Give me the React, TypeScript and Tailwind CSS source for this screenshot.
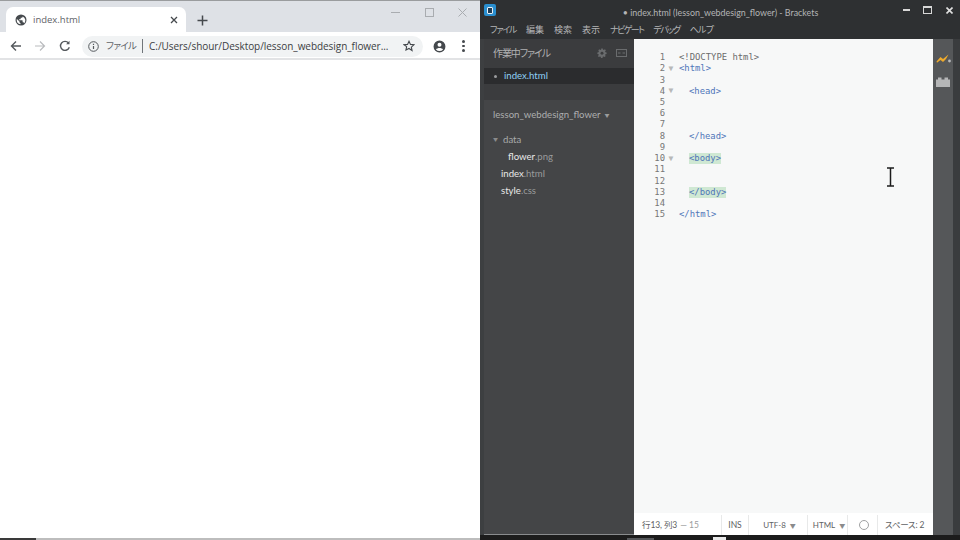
import React from "react";

const sans = { fontFamily: '"Open Sans","Noto Sans CJK JP",sans-serif' };
const ui = { fontFamily: 'Lato,"Noto Sans CJK JP",sans-serif' };
const mono = { fontFamily: '"DejaVu Sans Mono","Liberation Mono",monospace' };
const palt = "[font-feature-settings:'palt']";

function Line({ n, fold, children }: { n: number; fold?: boolean; children?: React.ReactNode }) {
  return (
    <div className="flex h-[11.22px] items-center text-[8.9px] leading-none">
      <span className="w-[31px] shrink-0 text-right text-[#767676]">{n}</span>
      <span className="flex w-[14px] shrink-0 justify-center">
        {fold && <span className="ml-[-2px] text-[8px] text-[#b8b8b8]">▼</span>}
      </span>
      {children}
    </div>
  );
}

function Tag({ children, hl, indent }: { children: string; hl?: boolean; indent?: boolean }) {
  return (
    <span className={`${indent ? "ml-[10px]" : ""} ${hl ? "bg-[#cfe8d3]" : ""} py-[1px] text-[#4f76b8]`}>{children}</span>
  );
}

function Browser() {
  return (
    <div className="flex h-full w-[480px] shrink-0 flex-col bg-white" style={sans}>
      <div className="h-[1px] bg-[#9a9c9e]" />
      <div className="flex h-[31px] items-end bg-[#dee1e6]">
        <div className="ml-[6px] flex h-[25px] w-[180px] items-center rounded-t-[7px] bg-white pl-[9px] pr-[8px] pt-[1px]">
          <svg width="12" height="12" viewBox="0 0 24 24" fill="#45494d">
            <path d="M12 1a11 11 0 1 0 0 22 11 11 0 0 0 0-22zM3.500 12c0-.8.1-1.500.3-2.200L9 15v1a2 2 0 0 0 2 2v2.400A8.500 8.500 0 0 1 3.500 12zm14.700 5.800A2 2 0 0 0 16.300 16.500h-1v-3a1 1 0 0 0-1-1h-6v-2h2a1 1 0 0 0 1-1v-2h2a2 2 0 0 0 2-2v-.400a8.500 8.500 0 0 1 3 13.700z" />
          </svg>
          <span className="ml-[6px] mt-[1px] text-[9.5px] text-[#5f6368]">index.html</span>
          <svg className="ml-auto" width="8" height="8" viewBox="0 0 8 8" stroke="#45494d" strokeWidth="1.300">
            <path d="M1 1l6 6M7 1L1 7" />
          </svg>
        </div>
        <svg className="mb-[6px] ml-[11px]" width="11" height="11" viewBox="0 0 11 11" stroke="#45494d" strokeWidth="1.500">
          <path d="M5.500 0.500v10M0.500 5.500h10" />
        </svg>
        <div className="mb-[15px] ml-auto flex items-center gap-[24.500px] pr-[13px]">
          <span className="h-[1px] w-[9px] bg-[#a9acb0]" />
          <span className="h-[9px] w-[9px] border border-[#a9acb0]" />
          <svg width="9" height="9" viewBox="0 0 9 9" stroke="#a9acb0" strokeWidth="1">
            <path d="M0.500 0.500l8 8M8.500 0.500l-8 8" />
          </svg>
        </div>
      </div>
      <div className="flex h-[28px] items-center border-b-[2px] border-[#e2e3e5] bg-white pt-[2px]">
        <svg className="ml-[10px]" width="12" height="12" viewBox="0 0 12 12" fill="none" stroke="#55595d" strokeWidth="1.400">
          <path d="M11 6H1.500M6 1.500L1.500 6 6 10.500" />
        </svg>
        <svg className="ml-[12px]" width="12" height="12" viewBox="0 0 12 12" fill="none" stroke="#b9bbbe" strokeWidth="1.200">
          <path d="M1 6h9.500M6 1.500L10.500 6 6 10.500" />
        </svg>
        <svg className="ml-[13px]" width="12" height="12" viewBox="0 0 12 12" fill="none" stroke="#55595d" strokeWidth="1.400">
          <path d="M10.300 7.200A4.500 4.500 0 1 1 9.500 3" />
          <path d="M10.500 0.800v3.400H7.100" fill="#55595d" stroke="none" />
        </svg>
        <div className="ml-[11px] flex h-[21px] w-[341px] items-center rounded-full bg-[#f1f3f4] pl-[6px] pr-[8px]">
          <svg width="11" height="11" viewBox="0 0 11 11" fill="none" stroke="#55595d" strokeWidth="1">
            <circle cx="5.500" cy="5.500" r="4.800" />
            <path d="M5.500 5v3M5.500 2.700v1.200" strokeWidth="1.200" />
          </svg>
          <span className={`ml-[7px] whitespace-nowrap text-[9.500px] tracking-[-0.7px] text-[#5f6368] ${palt}`}>ファイル</span>
          <span className="ml-[6px] h-[14px] w-[1px] bg-[#70757a]" />
          <span className="ml-[6px] whitespace-nowrap text-[10px] tracking-[-0.05px] text-[#3c4043]">
            C:/Users/shour/Desktop/lesson_webdesign_flower...
          </span>
          <svg className="ml-auto shrink-0" width="12" height="12" viewBox="0 0 24 24" fill="none" stroke="#45494d" strokeWidth="2.200">
            <path d="M12 2.500l2.900 6.300 6.900.8-5.100 4.700 1.400 6.800L12 17l-6.100 3.100 1.400-6.800L2.200 9.600l6.900-.8z" />
          </svg>
        </div>
        <svg className="ml-[10px]" width="13" height="13" viewBox="0 0 24 24" fill="#45494d">
          <path d="M12 1a11 11 0 1 0 0 22 11 11 0 0 0 0-22zm0 4a3.700 3.700 0 1 1 0 7.400A3.700 3.700 0 0 1 12 5zm0 15.500a8.500 8.500 0 0 1-6.500-3c.9-1.700 4-2.700 6.500-2.700s5.600 1 6.500 2.700a8.500 8.500 0 0 1-6.500 3z" />
        </svg>
        <div className="ml-[16px] flex flex-col gap-[2px]">
          <span className="h-[2.500px] w-[2.500px] rounded-full bg-[#45494d]" />
          <span className="h-[2.500px] w-[2.500px] rounded-full bg-[#45494d]" />
          <span className="h-[2.500px] w-[2.500px] rounded-full bg-[#45494d]" />
        </div>
      </div>
      <div className="flex-1" />
      <div className="flex h-[2px] bg-[#bdbdbd]">
        <div className="w-[36px] bg-[#3a3a3a]" />
      </div>
    </div>
  );
}

function Sidebar() {
  return (
    <div className={`flex w-[150px] shrink-0 flex-col border-b border-[#8a8c8e] bg-[#3b3c3e] text-[#b0b1b2] ${palt}`} style={ui}>
      <div className="flex h-[29px] items-center pb-[1px] pl-[9px] pr-[7px] text-[10px]">
        <span className="tracking-[-1.1px]">作業中ファイル</span>
        <svg className="ml-auto" width="10" height="10" viewBox="0 0 24 24" fill="#6a6c6e">
          <path d="M10 1h4l.6 3 2.300 1 2.600-1.700 2.800 2.800L20 8.700l1 2.300 3 .6v3.800l-3 .6-1 2.300 1.700 2.600-2.800 2.800-2.600-1.700-2.300 1-.6 3h-4l-.6-3-2.300-1-2.600 1.700-2.800-2.800L4 18.300l-1-2.300-3-.6v-3.800l3-.6 1-2.300L2.300 6.100l2.800-2.800L7.700 5 10 4z" transform="scale(0.92) translate(1 0)" />
          <circle cx="12" cy="12.500" r="3.500" fill="#3b3c3e" />
        </svg>
        <svg className="ml-[9px]" width="11" height="8" viewBox="0 0 11 8" fill="none" stroke="#6a6c6e">
          <rect x="0.500" y="0.500" width="10" height="7" />
          <path d="M2 4h2.500M6.500 4H9" />
        </svg>
      </div>
      <div className="flex h-[16px] items-center bg-[#2b2c2e] pl-[10px] text-[9.600px] text-[#8fd0f5]">
        <span className="h-[3px] w-[3px] rounded-full bg-[#9a9c9e]" />
        <span className="ml-[7px]">index.html</span>
      </div>
      <div className="h-[16px]" />
      <div className="flex flex-1 flex-col bg-[#444547]">
        <div className="mt-[8px] flex h-[14px] items-center pl-[9px] text-[9.600px] text-[#adaeaf]">
          lesson_webdesign_flower
          <span className="ml-[4px] mt-[1px] text-[5px] text-[#9a9b9c]">▼</span>
        </div>
        <div className="mt-[9.500px] flex h-[17px] items-center pl-[9px] text-[9.600px] text-[#a9aaab]">
          <span className="mr-[5px] text-[5px] text-[#8a8b8c]">▼</span>
          data
        </div>
        <div className="flex h-[17px] items-center pl-[24px] text-[9.600px]">
          <span className="text-[#e8e8e8]">flower</span>
          <span className="text-[#9a9b9c]">.png</span>
        </div>
        <div className="flex h-[17px] items-center pl-[17px] text-[9.600px]">
          <span className="text-[#e8e8e8]">index</span>
          <span className="text-[#9a9b9c]">.html</span>
        </div>
        <div className="flex h-[17px] items-center pl-[17px] text-[9.600px]">
          <span className="text-[#e8e8e8]">style</span>
          <span className="text-[#9a9b9c]">.css</span>
        </div>
      </div>
    </div>
  );
}

function Editor() {
  return (
    <div className="relative flex flex-1 flex-col bg-[#f7f8f8]">
      <div className="flex-1 pt-[13px]" style={mono}>
        <Line n={1}><span className="text-[#6b6b6b]">&lt;!DOCTYPE html&gt;</span></Line>
        <Line n={2} fold><Tag>&lt;html&gt;</Tag></Line>
        <Line n={3} />
        <Line n={4} fold><Tag indent>&lt;head&gt;</Tag></Line>
        <Line n={5} />
        <Line n={6} />
        <Line n={7} />
        <Line n={8}><Tag indent>&lt;/head&gt;</Tag></Line>
        <Line n={9} />
        <Line n={10} fold><Tag indent hl>&lt;body&gt;</Tag></Line>
        <Line n={11} />
        <Line n={12} />
        <Line n={13}><Tag indent hl>&lt;/body&gt;</Tag></Line>
        <Line n={14} />
        <Line n={15}><Tag>&lt;/html&gt;</Tag></Line>
      </div>
      <svg className="absolute left-[252px] top-[128px]" width="9" height="20" viewBox="0 0 9 20" fill="none" stroke="#1c1c1c" strokeWidth="1.500">
        <path d="M1 1h7M4.500 1v18M1 19h7" />
      </svg>
      <div className={`flex h-[22px] items-center bg-white pt-[2px] text-[8.500px] text-[#606264] ${palt}`} style={ui}>
        <div className="flex h-full w-[88px] items-center border-r border-[#e8e9e9] pl-[8px]">
          <span className="tracking-[-0.1px]">行13, 列3</span>
          <span className="ml-[3px] text-[#9a9b9c]">— 15</span>
        </div>
        <div className="flex h-full w-[27px] items-center justify-center border-r border-[#e8e9e9]">INS</div>
        <div className="flex h-full w-[59px] items-center justify-center border-r border-[#e8e9e9] pl-[3px] text-[8px]">
          UTF-8<span className="ml-[4px] text-[6px] text-[#8a8b8c]">▼</span>
        </div>
        <div className="flex h-full w-[40px] items-center justify-center border-r border-[#e8e9e9] pl-[3px] text-[8px]">
          HTML<span className="ml-[4px] text-[6px] text-[#8a8b8c]">▼</span>
        </div>
        <div className="flex h-full w-[30px] items-center justify-center border-r border-[#e8e9e9]">
          <span className="ml-[3px] h-[10px] w-[10px] rounded-full border border-[#a0a1a2]" />
        </div>
        <div className="flex h-full flex-1 items-center pl-[7px] tracking-[-0.2px]">スペース: 2</div>
      </div>
    </div>
  );
}

function Brackets() {
  return (
    <div className="flex h-full flex-1 flex-col bg-[#2e3032] text-[#b8b9ba]" style={ui}>
      <div className="flex h-[20px] items-center pl-[4px] pr-[7px]">
        <div className="flex h-[12px] w-[12px] items-center justify-center rounded-[2px] bg-[#2a8fd0]">
          <span className="h-[7px] w-[6px] rounded-[1px] border-[1.500px] border-[#e8f0f5] bg-[#1f3c55]" />
        </div>
        <div className="flex-1 pl-[42px] pt-[6px] text-center text-[8.900px] text-[#b4b5b6]">• index.html (lesson_webdesign_flower) - Brackets</div>
        <span className="h-[2px] w-[7px] bg-[#d8d8d8]" />
        <span className="ml-[13px] h-[8px] w-[9px] border border-t-[2px] border-[#d8d8d8]" />
        <svg className="ml-[14px]" width="7" height="7" viewBox="0 0 7 7" stroke="#e0e0e0" strokeWidth="1.600">
          <path d="M0.500 0.500l6 6M6.500 0.500l-6 6" />
        </svg>
      </div>
      <div className={`flex h-[19px] items-center gap-[10px] pl-[10px] pt-[1px] text-[9px] text-[#b4b5b6] ${palt}`}>
        <span className="tracking-[-1.3px]">ファイル</span>
        <span>編集</span>
        <span>検索</span>
        <span>表示</span>
        <span className="tracking-[-1.6px]">ナビゲート</span>
        <span className="tracking-[-1.5px]">デバッグ</span>
        <span className="tracking-[-0.7px]">ヘルプ</span>
      </div>
      <div className="flex min-h-0 flex-1">
        <div className="w-[4px] shrink-0 bg-[#3d3f41]" />
        <Sidebar />
        <Editor />
        <div className="flex w-[20px] shrink-0 flex-col items-center gap-[14px] bg-[#555759] pt-[15px]">
          <svg width="15" height="9" viewBox="0 0 15 9">
            <path d="M0.500 7.500L4.500 3 7 5 12.500 0.500 10 5 7 8 4.500 6 1 8.800z" fill="#eeaa2c" />
            <circle cx="13.500" cy="7" r="1.400" fill="#b8b9ba" />
          </svg>
          <svg width="14" height="10" viewBox="0 0 14 10" fill="#b5b6b7">
            <path d="M0 2.500h2V0.500h3.500v2h3V0.500H12v2h2V10H0z" />
          </svg>
        </div>
        <div className="w-[7px] shrink-0 bg-[#3a3c3e]" />
      </div>
      <div className="flex h-[5px] items-end bg-[#1c1c1c]">
        <span className="ml-[147px] h-[2px] w-[27px] bg-[#55575a]" />
        <span className="ml-[59px] h-[3px] w-[13px] bg-[#e8e8e8]" />
      </div>
    </div>
  );
}

export default function App() {
  return (
    <div className="flex h-[540px] w-[960px] overflow-hidden">
      <Browser />
      <Brackets />
    </div>
  );
}
